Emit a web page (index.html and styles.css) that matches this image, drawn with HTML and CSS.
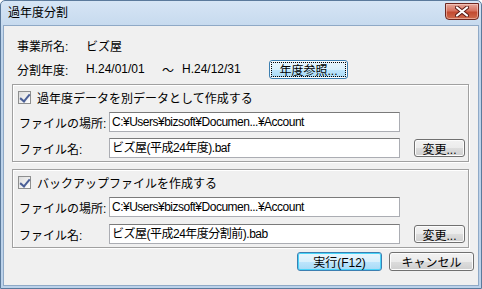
FILE: index.html
```html
<!DOCTYPE html>
<html lang="ja">
<head>
    <meta charset="UTF-8">
    <title>過年度分割</title>
    <link rel="stylesheet" href="styles.css">
</head>
<body>
    <div class="ventana">
        <!-- Barra de título -->
        <div class="titulo">
            <span class="titulo-texto">過年度分割</span>
            <button class="cerrar">
                <svg width="14" height="11" viewBox="0 0 14 11">
                    <path d="M2 1.5 L12 9.5 M12 1.5 L2 9.5" stroke="#5a1a14" stroke-width="4" stroke-linecap="round"/>
                    <path d="M2 1.5 L12 9.5 M12 1.5 L2 9.5" stroke="#ffffff" stroke-width="2.2" stroke-linecap="round"/>
                </svg>
            </button>
        </div>

        <!-- Contenido -->
        <div class="cliente">
            <div class="fila">
                <span class="etiqueta">事業所名:</span>
                <span>ビズ屋</span>
            </div>
            <div class="fila fila-periodo">
                <span class="etiqueta">分割年度:</span>
                <span class="fecha">H.24/01/01</span>
                <span class="tilde">～</span>
                <span class="fecha">H.24/12/31</span>
                <button class="boton boton-foco boton-anio">年度参照...</button>
            </div>

            <div class="grupo">
                <div class="grupo-cabecera">
                    <span class="check"></span>
                    <span>過年度データを別データとして作成する</span>
                </div>
                <div class="fila-campo">
                    <span class="etiqueta-campo">ファイルの場所:</span>
                    <div class="campo">C:¥Users¥bizsoft¥Documen...¥Account</div>
                </div>
                <div class="fila-campo">
                    <span class="etiqueta-campo">ファイル名:</span>
                    <div class="campo">ビズ屋(平成24年度).baf</div>
                    <button class="boton boton-cambiar">変更...</button>
                </div>
            </div>

            <div class="grupo grupo-2">
                <div class="grupo-cabecera">
                    <span class="check"></span>
                    <span>バックアップファイルを作成する</span>
                </div>
                <div class="fila-campo">
                    <span class="etiqueta-campo">ファイルの場所:</span>
                    <div class="campo">C:¥Users¥bizsoft¥Documen...¥Account</div>
                </div>
                <div class="fila-campo">
                    <span class="etiqueta-campo">ファイル名:</span>
                    <div class="campo">ビズ屋(平成24年度分割前).bab</div>
                    <button class="boton boton-cambiar">変更...</button>
                </div>
            </div>

            <div class="acciones">
                <button class="boton boton-defecto">実行(F12)</button>
                <button class="boton">キャンセル</button>
            </div>
        </div>
    </div>
</body>
</html>
```

FILE: styles.css
```css
/* Reset básico */
* {
    margin: 0;
    padding: 0;
    box-sizing: border-box;
}

body {
    font-family: "Liberation Sans", "Noto Sans CJK JP", sans-serif;
    font-size: 12px;
    color: #000000;
    background-color: #ffffff;
    width: 482px;
    height: 289px;
    overflow: hidden;
}

/* Marco de la ventana */
.ventana {
    width: 482px;
    height: 289px;
    display: flex;
    flex-direction: column;
    border: 1px solid #5b7a9c;
    border-radius: 5px 5px 0 0;
    background: linear-gradient(to bottom, #d6e5f5 0%, #bdd3ea 40px, #bcd2ea 100%);
    padding: 0 2px 2px 2px;
}

/* Barra de título */
.titulo {
    height: 24px;
    display: flex;
    align-items: center;
    padding-left: 5px;
    flex-shrink: 0;
}

.titulo-texto {
    font-size: 12px;
    line-height: 14px;
    margin-top: -1px;
}

.cerrar {
    margin-left: auto;
    margin-right: 0;
    margin-top: -3px;
    width: 34px;
    height: 17px;
    border: 1px solid #6e2720;
    border-radius: 0 0 4px 4px;
    background: linear-gradient(to bottom, #e6a89c 0%, #d6725f 45%, #c24a31 55%, #cf6b4d 100%);
    box-shadow: inset 0 0 0 1px rgba(255, 220, 210, 0.5);
    display: flex;
    align-items: center;
    justify-content: center;
}

/* Área cliente */
.cliente {
    flex-grow: 1;
    background-color: #f0f0f0;
    border: 1px solid #8fa9c6;
    padding: 11px 4px 0 8px;
    display: flex;
    flex-direction: column;
}

.fila {
    height: 16px;
    display: flex;
    align-items: center;
    padding-left: 5px;
}

.etiqueta {
    width: 69px;
}

.fila-periodo {
    height: 20px;
    margin-top: 6px;
}

.fecha {
    width: 76px;
}

.tilde {
    width: 20px;
}

.boton-anio {
    margin-left: 11px;
    width: 79px;
}

/* Botones */
.boton {
    font-family: inherit;
    font-size: 12px;
    height: 19px;
    border: 1px solid #707070;
    border-radius: 3px;
    background: linear-gradient(to bottom, #f2f2f2 0%, #ebebeb 50%, #dddddd 51%, #cfcfcf 100%);
    box-shadow: inset 0 0 0 1px #fcfcfc;
    color: #000000;
    display: flex;
    align-items: center;
    justify-content: center;
}

.boton-foco {
    border-color: #3c7fb1;
    background: linear-gradient(to bottom, #eaf6fd 0%, #d9f0fc 50%, #bee6fd 51%, #a7d9f5 100%);
    outline: 1px dotted #000000;
    outline-offset: -3px;
}

.boton-defecto {
    border-color: #3c7fb1;
    background: linear-gradient(to bottom, #eaf6fd 0%, #d9f0fc 50%, #bee6fd 51%, #a7d9f5 100%);
    box-shadow: inset 0 0 0 1px #48d4f9;
}

/* Grupos */
.grupo {
    margin-top: 5px;
    width: 457px;
    height: 78px;
    border: 1px solid #a0a0a0;
    box-shadow: inset 1px 1px 0 #ffffff, 1px 1px 0 #ffffff;
    padding: 5px 0 0 5px;
    display: flex;
    flex-direction: column;
}

.grupo-2 {
    margin-top: 7px;
    height: 79px;
}

.grupo-cabecera {
    height: 14px;
    display: flex;
    align-items: center;
    gap: 6px;
}

.check {
    width: 13px;
    height: 13px;
    border: 1px solid #8e8f8f;
    background: linear-gradient(135deg, #dcdcdc, #ffffff);
    position: relative;
}

.check::after {
    content: "";
    position: absolute;
    left: 3px;
    top: 0;
    width: 4px;
    height: 8px;
    border: solid #4a5f97;
    border-width: 0 2px 2px 0;
    transform: rotate(40deg);
}

.fila-campo {
    display: flex;
    align-items: center;
    margin-top: 6px;
    height: 20px;
}

.grupo-cabecera + .fila-campo {
    margin-top: 8px;
}

.grupo-2 .fila-campo + .fila-campo {
    margin-top: 7px;
}

.etiqueta-campo {
    width: 91px;
    padding-left: 1px;
}

.campo {
    width: 291px;
    height: 20px;
    background-color: #ffffff;
    border: 1px solid #abadb3;
    border-top-color: #7a7a7a;
    padding-left: 2px;
    line-height: 18px;
    letter-spacing: -0.5px;
    white-space: nowrap;
    overflow: hidden;
}

.boton-cambiar {
    margin-left: 14px;
    width: 51px;
    height: 18px;
}

/* Botones inferiores */
.acciones {
    margin-top: 4px;
    display: flex;
    justify-content: flex-end;
    gap: 7px;
}

.acciones .boton {
    width: 85px;
    height: 19px;
}
```
